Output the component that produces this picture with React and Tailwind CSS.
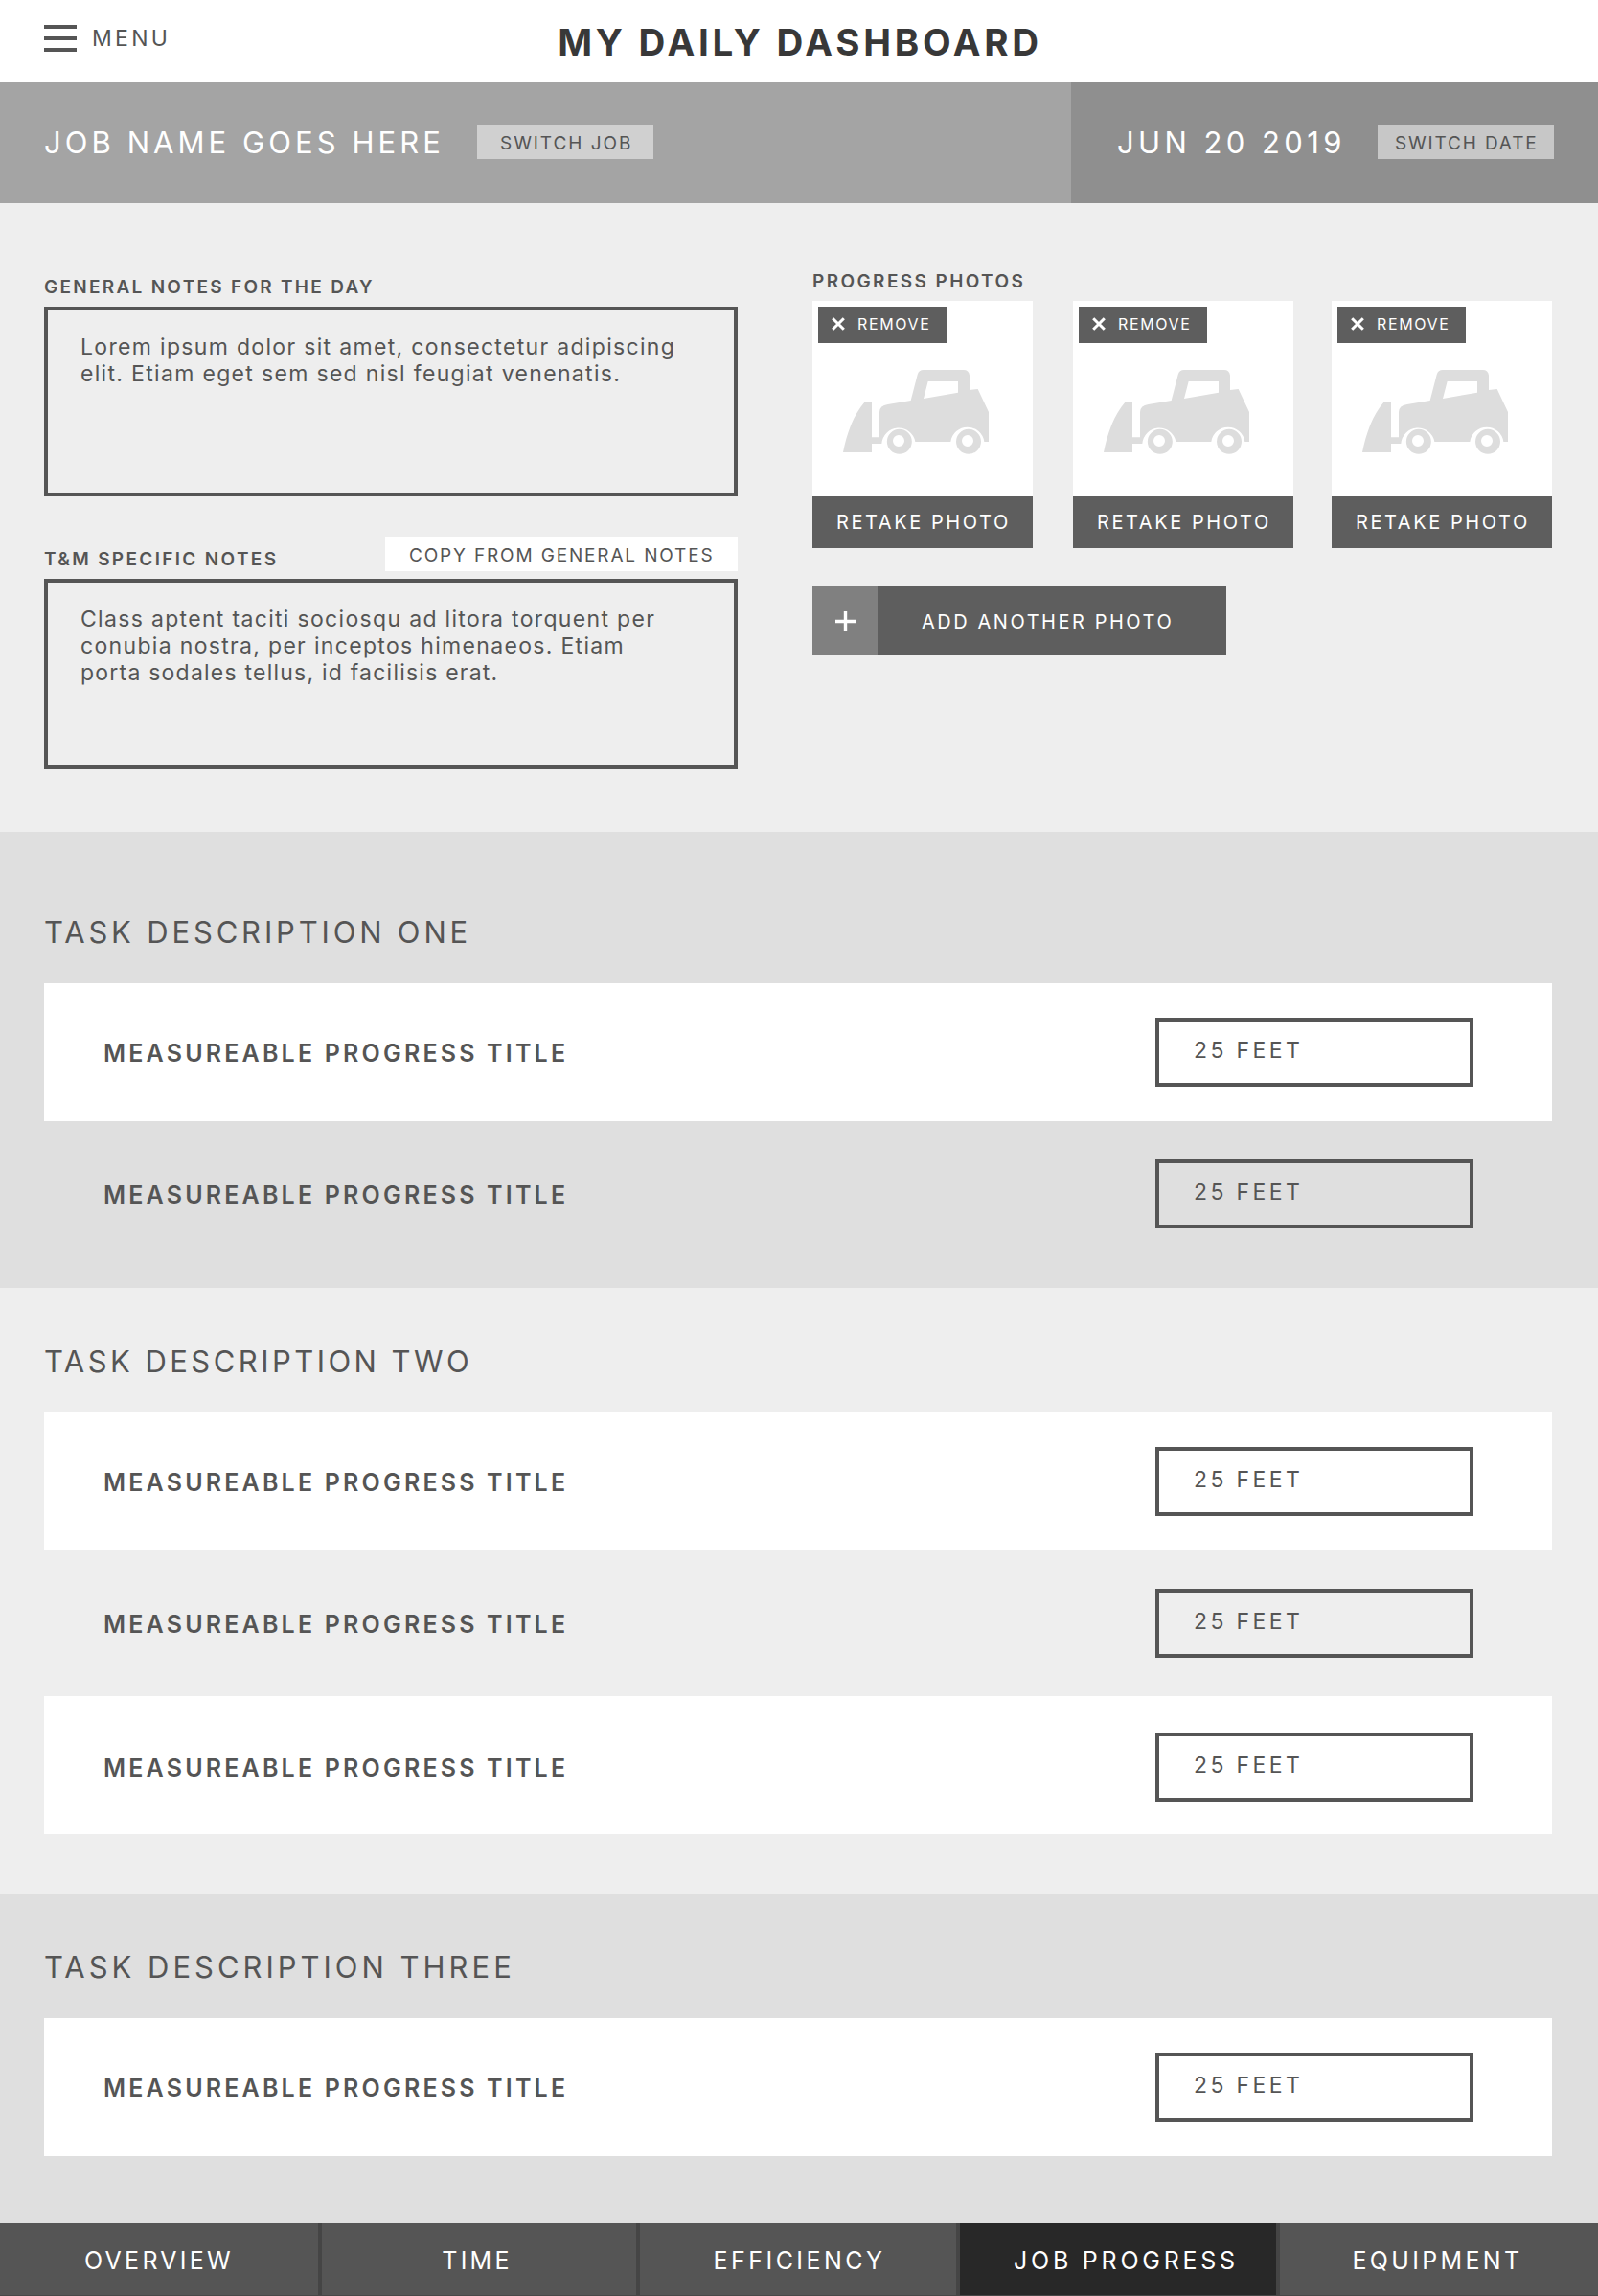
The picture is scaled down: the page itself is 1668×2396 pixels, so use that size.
import React from "react";

function LoaderIcon() {
  return (
    <svg className="h-[88px] w-[152px]" viewBox="150 348 456 264" fill="#dddddd">
      <path
        fillRule="evenodd"
        d="M264 559V480Q265 459 290 456L362 444L383 363Q387 348 402 348H527Q544 348 546 365V411L572 408L606 480V573H592A53 53 0 0 0 487 573H376A53 53 0 0 0 271 579H240V606H150C161 550 182 488 219 447H240V559ZM402 438L416 384H510V419Z"
      />
      <path
        fillRule="evenodd"
        d="M287.500 572.500a39 39 0 1 0 78 0a39 39 0 1 0 -78 0ZM306 570a18 18 0 1 0 36 0a18 18 0 1 0 -36 0Z"
      />
      <path
        fillRule="evenodd"
        d="M504 572.500a39 39 0 1 0 78 0a39 39 0 1 0 -78 0ZM522 570a18 18 0 1 0 36 0a18 18 0 1 0 -36 0Z"
      />
    </svg>
  );
}

function PhotoCard() {
  return (
    <div className="flex h-[258px] w-[230px] flex-col bg-white">
      <div className="flex flex-1 flex-col items-start pt-1.5 pl-1.5">
        <button className="flex h-[38px] w-[134px] items-center bg-[#5e5e5e] pb-0.5 pl-3.5 text-white">
          <svg className="h-3.5 w-3.5" viewBox="0 0 14 14" stroke="currentColor" strokeWidth="3" fill="none">
            <path d="M1.200 1.200L12.800 12.800M12.800 1.200L1.200 12.800" />
          </svg>
          <span className="ml-[13px] text-[16px] tracking-[1.62px]">REMOVE</span>
        </button>
        <div className="mt-7 ml-[26px]">
          <LoaderIcon />
        </div>
      </div>
      <button className="flex h-[54px] items-center bg-[#5e5e5e] pl-[25px] text-[20px] tracking-[2.57px] whitespace-nowrap text-white">
        RETAKE PHOTO
      </button>
    </div>
  );
}

function ProgressRow({ filled, shifted }) {
  return (
    <div
      className={`flex h-36 items-center justify-between pr-[82px] pl-[62px] ${filled ? "bg-white" : ""} ${shifted ? "pt-1" : ""}`}
    >
      <div className="pt-1 text-[25px] font-semibold tracking-[3.19px]">MEASUREABLE PROGRESS TITLE</div>
      <div className="flex h-[72px] w-[332px] items-center border-4 border-[#555555] pb-1 pl-9 text-[23px] tracking-[3.38px]">
        25 FEET
      </div>
    </div>
  );
}

function TaskSection({ title, rows, className, titleClass, shiftLast }) {
  return (
    <section className={`px-[46px] pr-12 ${className}`}>
      <h2 className={`mb-[37px] text-[31px] leading-8 ${titleClass}`}>{title}</h2>
      <div className="flex flex-col gap-1">
        {Array.from({ length: rows }, (_, i) => (
          <ProgressRow key={i} filled={i % 2 === 0} shifted={shiftLast && i === rows - 1} />
        ))}
      </div>
    </section>
  );
}

function NotesBox({ lines }) {
  return (
    <div className="h-[198px] border-4 border-[#555555] pt-6 pl-[34px] text-[23px] leading-7 tracking-[1.32px] whitespace-nowrap">
      {lines.map((line) => (
        <div key={line} className="nth-3:tracking-[1.22px]">
          {line}
        </div>
      ))}
    </div>
  );
}

function NavItem({ label, className }) {
  return (
    <div className={`flex items-center justify-center border-[#454545] pt-1 text-[25px] ${className}`}>{label}</div>
  );
}

export default function App() {
  return (
    <div className="h-[2396px] w-[1668px] overflow-hidden bg-[#eeeeee] font-['Inter',sans-serif] text-[#555555]">
      <header className="grid h-[86px] grid-cols-3 bg-white">
        <div className="flex h-20 items-center pl-[46px]">
          <div className="flex w-[34px] flex-col gap-2">
            <span className="h-1 bg-[#555555]" />
            <span className="h-1 bg-[#555555]" />
            <span className="h-1 bg-[#555555]" />
          </div>
          <span className="ml-4 text-[23px] tracking-[3.3px]">MENU</span>
        </div>
        <h1 className="flex items-center justify-center pt-1 pl-0.5 text-[38.5px] font-bold tracking-[3.74px] whitespace-nowrap text-[#383838]">
          MY DAILY DASHBOARD
        </h1>
      </header>

      <div className="flex h-[126px]">
        <div className="flex w-[1118px] items-center bg-[#a4a4a4] pl-[46px]">
          <span className="w-[452px] text-[31px] tracking-[4.06px] text-white">JOB NAME GOES HERE</span>
          <button className="mb-0.5 h-9 w-[184px] bg-[#d0d0d0] pt-0.5 pl-6 text-left text-[19px] leading-[35px] tracking-[1.95px]">
            SWITCH JOB
          </button>
        </div>
        <div className="flex flex-1 items-center bg-[#8f8f8f] pl-12">
          <span className="w-[272px] text-[31px] tracking-[4.42px] text-white">JUN 20 2019</span>
          <button className="mb-0.5 h-9 w-[184px] bg-[#c7c7c7] pt-0.5 pl-[18px] text-left text-[19px] leading-[35px] tracking-[1.84px]">
            SWITCH DATE
          </button>
        </div>
      </div>

      <div className="flex h-[656px]">
        <div className="w-[770px] pt-[77px] pl-[46px]">
          <div className="h-[31px] text-[19px] leading-[22px] font-semibold tracking-[2.28px]">
            GENERAL NOTES FOR THE DAY
          </div>
          <NotesBox
            lines={[
              "Lorem ipsum dolor sit amet, consectetur adipiscing",
              "elit. Etiam eget sem sed nisl feugiat venenatis.",
            ]}
          />
          <div className="mt-[42px] mb-2 flex h-9 justify-between">
            <div className="pt-[13px] text-[19px] leading-[22px] font-semibold tracking-[2.34px]">
              T&amp;M SPECIFIC NOTES
            </div>
            <button className="h-9 w-[368px] bg-white pt-0.5 pl-[25px] text-left text-[19px] leading-9 tracking-[1.84px]">
              COPY FROM GENERAL NOTES
            </button>
          </div>
          <NotesBox
            lines={[
              "Class aptent taciti sociosqu ad litora torquent per",
              "conubia nostra, per inceptos himenaeos. Etiam",
              "porta sodales tellus, id facilisis erat.",
            ]}
          />
        </div>
        <div className="ml-[78px] w-[772px] pt-[71px]">
          <div className="h-[31px] text-[19px] leading-[22px] font-semibold tracking-[2.4px]">PROGRESS PHOTOS</div>
          <div className="flex">
            <PhotoCard />
            <div className="mr-10 ml-[42px]">
              <PhotoCard />
            </div>
            <PhotoCard />
          </div>
          <button className="mt-10 flex h-[72px] w-[432px] bg-[#5e5e5e] text-white">
            <span className="flex h-full w-[68px] items-center justify-center bg-[#808080] pt-px">
              <svg className="h-[21px] w-[21px]" viewBox="0 0 21 21" stroke="currentColor" strokeWidth="3.4" fill="none">
                <path d="M0 10.500H21M10.500 0V21" />
              </svg>
            </span>
            <span className="pt-px pl-[46px] text-[20px] leading-[72px] tracking-[2.54px]">ADD ANOTHER PHOTO</span>
          </button>
        </div>
      </div>

      <TaskSection
        title="TASK DESCRIPTION ONE"
        rows={2}
        className="h-[476px] bg-[#dfdfdf] pt-[89px]"
        titleClass="tracking-[3.82px]"
      />
      <TaskSection
        title="TASK DESCRIPTION TWO"
        rows={3}
        shiftLast
        className="h-[632px] bg-[#eeeeee] pt-[61px]"
        titleClass="tracking-[3.45px]"
      />
      <TaskSection
        title="TASK DESCRIPTION THREE"
        rows={1}
        className="h-[344px] bg-[#dfdfdf] pt-[61px]"
        titleClass="tracking-[3.98px]"
      />

      <nav className="flex h-[76px] border-b border-[#484848] bg-[#555555] text-white">
        <NavItem label="OVERVIEW" className="w-[336px] border-r-4 tracking-[3.24px]" />
        <NavItem label="TIME" className="w-[332px] border-r-4 pr-1 tracking-[3.25px]" />
        <NavItem label="EFFICIENCY" className="w-[334px] border-r-4 pl-[3px] tracking-[3.46px]" />
        <NavItem label="JOB PROGRESS" className="w-[334px] border-r-4 bg-[#282828] pl-[17px] tracking-[3.75px]" />
        <NavItem label="EQUIPMENT" className="w-[332px] pr-[3px] tracking-[3.33px]" />
      </nav>
    </div>
  );
}
